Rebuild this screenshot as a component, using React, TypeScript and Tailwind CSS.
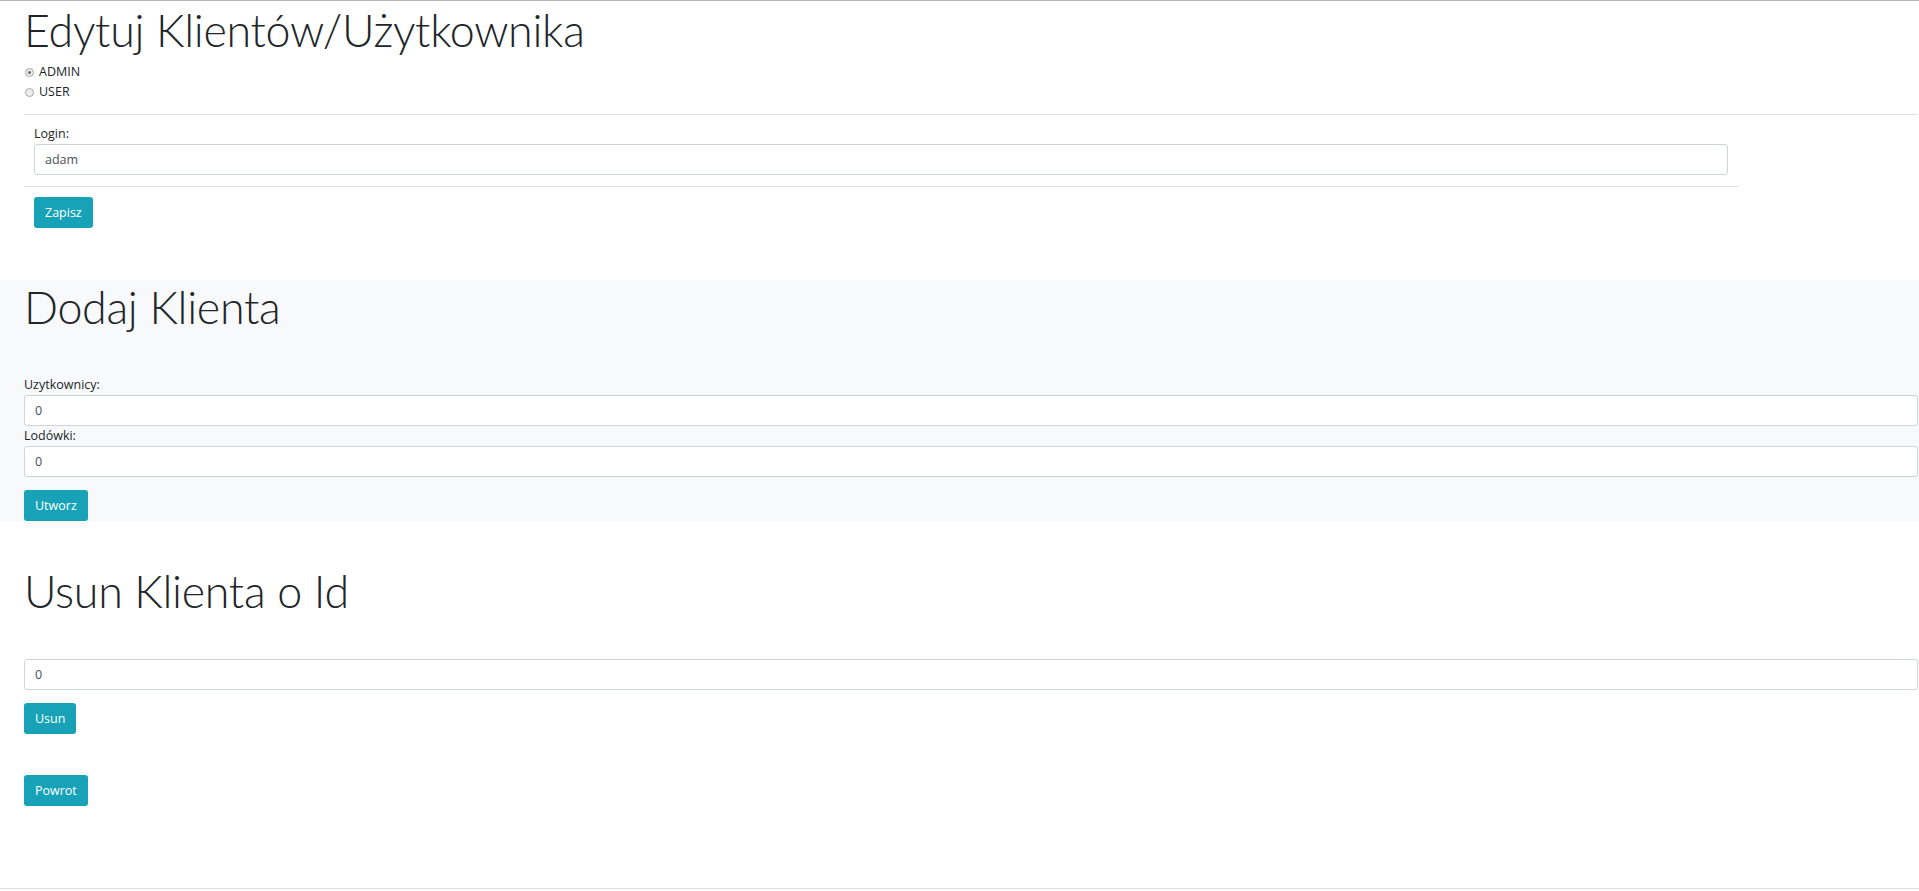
import React from 'react';

function Radio({ label, checked }: { label: string; checked?: boolean }) {
  return (
    <label className="flex items-center h-[20px]">
      <span className="ml-[1px] w-[9px] h-[9px] rounded-full border border-[#a8a8a8] bg-[#ececec] flex items-center justify-center">
        {checked && <span className="w-[3px] h-[3px] rounded-full bg-[#6b6b6b]" />}
      </span>
      <span className="ml-[5px]">{label}</span>
    </label>
  );
}

function Field({ label, value }: { label?: string; value: string }) {
  return (
    <div>
      {label && <label className="block leading-[20px] h-[20px]">{label}</label>}
      <input
        defaultValue={value}
        className="block w-full h-[31px] px-[10px] bg-white border border-[#ced4da] rounded-[3px] text-[#495057] outline-none"
      />
    </div>
  );
}

function Btn({ children }: { children: React.ReactNode }) {
  return (
    <button className="h-[31px] px-[11px] rounded-[3px] bg-[#17a2b8] text-white leading-[19px]">
      {children}
    </button>
  );
}

const title = "text-[44.8px] leading-[54px] font-light tracking-[-0.3px] font-[Lato,sans-serif]";

export default function App() {
  return (
    <div className="min-h-[891px] bg-white text-[#212529] font-['Open_Sans',sans-serif] text-[12.5px]">
      {/* Edycja */}
      <section className="border-t border-[#b4b4b4] pt-[2px] pb-[52px] pl-[24px] pr-px">
        <h1 className={title}>Edytuj Klientów/Użytkownika</h1>
        <div className="mt-[5px]">
          <Radio label="ADMIN" checked />
          <Radio label="USER" />
        </div>
        <hr className="mt-[12px] border-[#e0e0e3]" />
        <div className="w-[1714px] mt-[9px]">
          <div className="px-[10px]">
            <Field label="Login:" value="adam" />
          </div>
          <hr className="mt-[11px] border-[#e0e0e3]" />
          <div className="px-[10px] mt-[10px]">
            <Btn>Zapisz</Btn>
          </div>
        </div>
      </section>

      {/* Dodaj */}
      <section className="bg-[#f8f9fa] pl-[24px] pr-px">
        <h1 className={title}>Dodaj Klienta</h1>
        <div className="mt-[41px]">
          <Field label="Uzytkownicy:" value="0" />
          <Field label="Lodówki:" value="0" />
          <div className="mt-[13px]">
            <Btn>Utworz</Btn>
          </div>
        </div>
      </section>

      {/* Usun */}
      <section className="pt-[43px] pb-[82px] pl-[24px] pr-px">
        <h1 className={title}>Usun Klienta o Id</h1>
        <div className="mt-[41px]">
          <Field value="0" />
          <div className="mt-[13px]">
            <Btn>Usun</Btn>
          </div>
          <div className="mt-[41px]">
            <Btn>Powrot</Btn>
          </div>
        </div>
      </section>

      <div className="border-t border-[#dcdcdc] h-[3px]" />
    </div>
  );
}
